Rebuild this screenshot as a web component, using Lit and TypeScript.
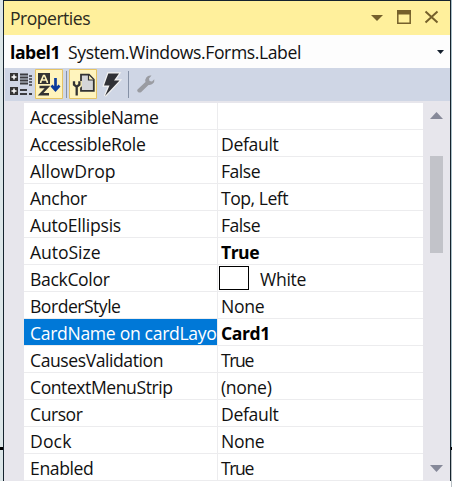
import { LitElement, html, css, nothing } from "lit";
import { customElement } from "lit/decorators.js";

interface Row { name: string; nw: number; value: string; vw: number; bold?: boolean; swatch?: boolean; selected?: boolean }

// nw and vw are the widths, in pixels, that the name and the value are spaced to.
const ROWS: Row[] = [
  { name: "AccessibleName", nw: 128.5, value: "", vw: 0 },
  { name: "AccessibleRole", nw: 115.5, value: "Default", vw: 57.5 },
  { name: "AllowDrop", nw: 85.5, value: "False", vw: 39 },
  { name: "Anchor", nw: 57, value: "Top, Left", vw: 67 },
  { name: "AutoEllipsis", nw: 91, value: "False", vw: 39 },
  { name: "AutoSize", nw: 70.5, value: "True", vw: 38, bold: true },
  { name: "BackColor", nw: 79.5, value: "White", vw: 46, swatch: true },
  { name: "BorderStyle", nw: 90.5, value: "None", vw: 43.5 },
  { name: "CardName on cardLayo", nw: 186.5, value: "Card1", vw: 49, bold: true, selected: true },
  { name: "CausesValidation", nw: 133, value: "True", vw: 32 },
  { name: "ContextMenuStrip", nw: 142.5, value: "(none)", vw: 50.5 },
  { name: "Cursor", nw: 52.5, value: "Default", vw: 57.5 },
  { name: "Dock", nw: 41.5, value: "None", vw: 43.5 },
  { name: "Enabled", nw: 63.5, value: "True", vw: 32 },
];

@customElement("app-root")
export class AppRoot extends LitElement {
  static styles = css`
    :host { display: block; width: 452px; height: 487px; background: #fff; overflow: hidden;
      font: 17.6px/26px "Open Sans", "Noto Sans", sans-serif; color: #111; }
    * { box-sizing: border-box; }
    svg { display: block; flex: none; }
    .fit { display: inline-block; white-space: nowrap; }
    .outer { display: flex; height: 487px; }
    .left { width: 3px; height: 481px; background: linear-gradient(#dce6e8 0 447px, #000 447px 450px, #dce6e8 450px); }
    .panel { width: 448px; height: 481px; display: flex; flex-direction: column;
      border: solid #15232e; border-width: 1px 1px 0 1px; background: #e7e6ec; }
    .right { width: 1px; background: linear-gradient(#a9bfc8 0 447px, #000 447px 450px, #b9c0c4 450px); }
    .title { height: 34px; background: #fff09c; display: flex; align-items: center; justify-content: space-between; padding-left: 6px; color: #2b2a20; }
    .object { height: 33px; background: #fdfdfd; display: flex; align-items: center; padding-left: 6px; }
    .object .type { margin: 0 auto 0 8px; }
    .tools { height: 33px; background: #cfd6e5; display: flex; align-items: center; margin-left: 1px; }
    .grid { flex: 1; display: flex; padding: 2px 0 0 20px; min-height: 0; }
    .rows { width: 399px; background: #fff; }
    .row { display: grid; grid-template-columns: 193px 1px 1fr; height: 27px; border-bottom: 1px solid #ececee; }
    .name { padding: 1px 0 0 6px; height: 26px; white-space: nowrap; overflow: hidden; }
    .selected .name { background: #0078d7; color: #fff; }
    .rule { background: #ececee; }
    .value { padding: 1px 0 0 3px; height: 26px; display: flex; }
    .bold { font-weight: 700; color: #000; }
    .swatch { width: 30px; height: 24px; margin: 0 11px 0 -2px; border: 1px solid #000; }
    .bar { flex: 1; display: flex; flex-direction: column; align-items: center; padding: 9px 0 9px; }
    .thumb { width: 13px; height: 97px; background: #c2c3c9; margin-top: 37px; }
    .bar .down { margin-top: auto; }
  `;

  firstUpdated() {
    this.renderRoot.querySelectorAll<HTMLElement>(".fit").forEach(el => {
      const n = (el.textContent ?? "").length;
      const target = Number(el.dataset.w);
      if (n && target) el.style.letterSpacing = `${(target - el.getBoundingClientRect().width) / n}px`;
    });
  }

  private text(content: string, width: number, cls = "") {
    return html`<span class="fit ${cls}" data-w=${width}>${content}</span>`;
  }

  render() {
    return html`
      <div class="outer">
        <div class="left"></div>
        <div class="panel">
          <div class="title">${this.text("Properties", 80)}
            <svg width="79" height="34" viewBox="371 1 79 34"><path d="M371 15H383L377 21Z" fill="#75602b"/>
              <path d="M397.8 10.8H410.2V23.2H397.8Z" fill="none" stroke="#75602b" stroke-width="1.5"/><path d="M397 10H411V14.5H397Z" fill="#75602b"/>
              <path d="M425.5 11.5L437.5 22.5M437.5 11.5L425.5 22.5" stroke="#75602b" stroke-width="2"/></svg>
          </div>
          <div class="object">${this.text("label1", 50, "bold")}${this.text("System.Windows.Forms.Label", 233, "type")}
            <svg width="13" height="6"><path d="M0 1H7L3.5 5Z" fill="#15202e"/></svg></div>
          <div class="tools">
            <svg width="160" height="33" viewBox="5 68 160 33">
              <path d="M10 73h8v8h-8zM10 87h8v8h-8z" fill="#333"/>
              <path d="M11.5 77h5M14 74.5v5M11.5 91h5M14 88.5v5" stroke="#fff" stroke-width="1.5"/>
              <path d="M20 74.5h8M20 77.5h8M20 80.5h8M20 83.5h8M20 90h7M20 94h7M29 94h3" stroke="#3b3c40" stroke-width="1.9"/>
              <path d="M29 76h3M29 79h3M29 82h3M29 85h3" stroke="#3b3c40" stroke-width="1.7"/>
              <path d="M35.5 69.5h27v29h-27zM69.5 69.5h27v29h-27z" fill="#fff4bd" stroke="#e5c365"/>
              <path d="M38 73h12v11H38z" fill="#333"/>
              <path d="M40.7 83V82L43.5 75.5H44.5L47.3 82V83M42 80h4" fill="none" stroke="#fff4bd" stroke-width="1.6"/>
              <path d="M39.5 87H47.5L40.5 94.3H49" fill="none" stroke="#333" stroke-width="2.4"/>
              <path d="M55.5 78V90M51.5 85.5L55.5 90L59.5 85.5" fill="none" stroke="#0c3c9c" stroke-width="2.7"/>
              <path d="M66.5 71v27M128.5 71v27" stroke="#8591a6"/>
              <path d="M81 74.7H89L93.8 79.5V90.8H81Z" fill="#d4d5d8" stroke="#333" stroke-width="1.8"/>
              <path d="M88.5 75v5h5" fill="#fff4bd" stroke="#333" stroke-width="1.2"/>
              <path d="M74 81v4l2.700 2.300l2.700 -2.300v-4M76.700 87v8.500" fill="none" stroke="#fff4bd" stroke-width="5"/>
              <path d="M74 81.200v3.500l2.700 2l2.700 -2v-3.500M76.700 86v9.500" fill="none" stroke="#333" stroke-width="2.300"/>
              <path d="M108.3 73.5H119L114 80.5H119.5L105 96L109.5 85.5H104Z" fill="#303136" stroke="#f2f2f2" stroke-width="2.4" paint-order="stroke"/>
              <path d="M137.5 89.5L145.5 82A5 5 0 0 1 150.5 75.5L151.5 75.6L149 78.5L149.5 81L152 81.5L154.3 79.2A5 5 0 0 1 148.5 85L141 92.2Q139.5 93 138 92Q136.5 90.8 137.5 89.5Z" fill="#9a9ca2"/>
            </svg>
          </div>
          <div class="grid">
            <div class="rows">${ROWS.map(r => html`<div class="row ${r.selected ? "selected" : ""}">
              <div class="name">${this.text(r.name, r.nw)}</div><div class="rule"></div>
              <div class="value ${r.bold ? "bold" : ""}">${r.swatch ? html`<i class="swatch"></i>` : nothing}${this.text(r.value, r.vw)}</div>
            </div>`)}</div>
            <div class="bar"><svg width="13" height="7"><path d="M0 7L6.5 0L13 7Z" fill="#868999"/></svg>
              <div class="thumb"></div>
              <svg class="down" width="13" height="7"><path d="M0 0H13L6.5 7Z" fill="#868999"/></svg></div>
          </div>
        </div>
        <div class="right"></div>
      </div>`;
  }
}
